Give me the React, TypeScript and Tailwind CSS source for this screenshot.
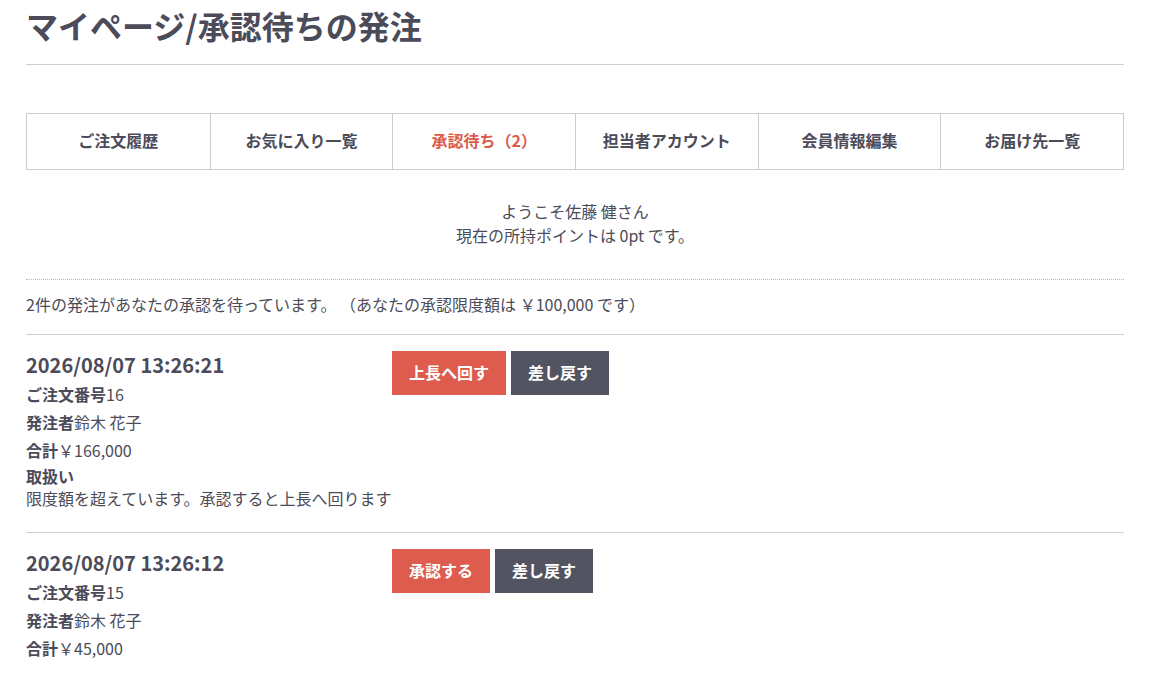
import React from "react";

const tabs = ["ご注文履歴", "お気に入り一覧", "承認待ち（2）", "担当者アカウント", "会員情報編集", "お届け先一覧"];

type Order = {
  date: string;
  no: string;
  total: string;
  primary: string;
  note?: string;
};

const orders: Order[] = [
  { date: "2026/08/07 13:26:21", no: "16", total: "￥166,000", primary: "上長へ回す", note: "限度額を超えています。承認すると上長へ回ります" },
  { date: "2026/08/07 13:26:12", no: "15", total: "￥45,000", primary: "承認する" },
];

export default function App() {
  return (
    <div
      className="min-h-[680px] bg-white px-[26px] text-[#4b4b59]"
      style={{ fontFamily: '"Noto Sans CJK JP", "Noto Sans", sans-serif' }}
    >
      <h1 className="border-b border-[#cfcfcf] pt-[3px] pb-[16px] text-[32px] font-bold leading-[45px] text-[#4b4b59]">
        マイページ/承認待ちの発注
      </h1>

      <div className="mt-[48px] grid h-[57px] grid-cols-6 border border-[#cccccc]">
        {tabs.map((t, i) => (
          <div
            key={t}
            className={`flex items-center justify-center pb-[3px] text-[16px] font-bold ${i > 0 ? "border-l border-[#cccccc]" : ""} ${i === 2 ? "text-[#dc5a4c]" : "text-[#4b4b59]"}`}
          >
            {t}
          </div>
        ))}
      </div>

      <div className="mt-[29px] text-center text-[16px] leading-[24px]">
        <p>ようこそ佐藤 健さん</p>
        <p>現在の所持ポイントは 0pt です。</p>
      </div>

      <div className="mt-[32px] border-t border-dotted border-[#b8b8b8] pt-[12px] pb-[18px] text-[16px] leading-[24px]">
        2件の発注があなたの承認を待っています。 （あなたの承認限度額は ￥100,000 です）
      </div>

      {orders.map((o, idx) => (
        <div
          key={o.no}
          className={`grid grid-cols-3 border-t border-[#cfcfcf] pt-[16px] ${idx === 0 ? "pb-[23px]" : "pb-[20px]"}`}
        >
          <div className="text-[16px]">
            <p className="text-[20px] font-bold leading-[28px]">{o.date}</p>
            <p className="mt-[1px] leading-[28px]">
              <span className="font-bold">ご注文番号</span>
              {o.no}
            </p>
            <p className="leading-[28px]">
              <span className="font-bold">発注者</span>鈴木 花子
            </p>
            <p className="leading-[28px]">
              <span className="font-bold">合計</span>
              {o.total}
            </p>
            {o.note && (
              <>
                <p className="mt-[1px] font-bold leading-[22px]">取扱い</p>
                <p className="leading-[22px]">{o.note}</p>
              </>
            )}
          </div>
          <div className="col-span-2 flex items-start gap-[5px]">
            <button className="h-[44px] bg-[#dd5c4e] px-[17px] pb-[2px] text-[16px] font-bold text-white">{o.primary}</button>
            <button className="h-[44px] bg-[#535462] px-[17px] pb-[2px] text-[16px] font-bold text-white">差し戻す</button>
          </div>
        </div>
      ))}
    </div>
  );
}
